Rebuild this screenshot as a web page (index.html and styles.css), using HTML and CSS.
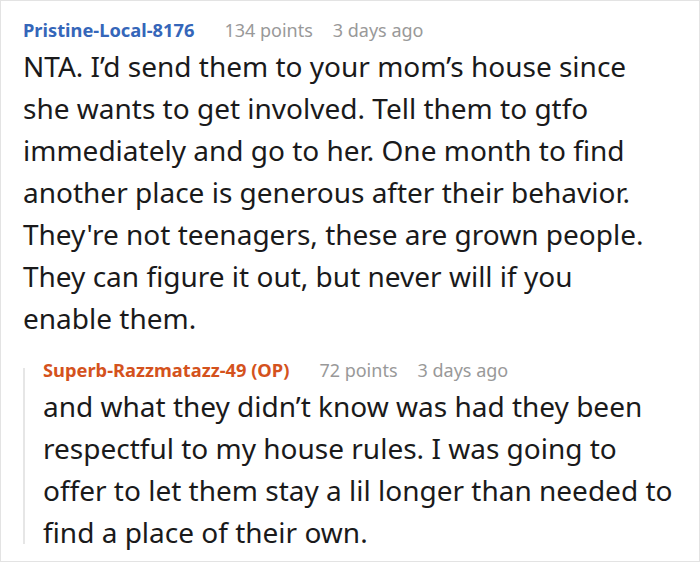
FILE: index.html
```html
<!DOCTYPE html>
<html>
<head>
<meta charset="utf-8">
<link rel="stylesheet" href="styles.css">
</head>
<body>
<div class="frame">
  <div class="comment">
    <div class="meta">
      <span class="author">Pristine-Local-8176</span>
      <span class="info">134 points</span>
      <span class="info">3 days ago</span>
    </div>
    <p class="text">NTA. I’d send them to your mom’s house since<br>she wants to get involved. Tell them to gtfo<br>immediately and go to her. One month to find<br>another place is generous after their behavior.<br>They're not teenagers, these are grown people.<br>They can figure it out, but never will if you<br>enable them.</p>
    <div class="reply">
      <div class="meta">
        <span class="author op">Superb-Razzmatazz-49 (OP)</span>
        <span class="info">72 points</span>
        <span class="info">3 days ago</span>
      </div>
      <p class="text">and what they didn’t know was had they been<br>respectful to my house rules. I was going to<br>offer to let them stay a lil longer than needed to<br>find a place of their own.</p>
    </div>
  </div>
</div>
</body>
</html>
```
FILE: styles.css
```css
html, body {
  margin: 0;
  padding: 0;
  background: #fff;
}
.frame {
  box-sizing: border-box;
  width: 700px;
  height: 562px;
  border: 1px solid #e3e3e3;
  overflow: hidden;
  font-family: "Noto Sans", "Open Sans", sans-serif;
}
.comment {
  padding: 14px 4px 0 22px;
}
.meta {
  display: flex;
  gap: 20px;
  font-size: 18px;
  line-height: 30px;
}
.author {
  color: #3566b9;
  font-weight: 700;
  font-size: 18.3px;
  margin-right: 10px;
}
.author.op {
  color: #d4521d;
}
.info {
  color: #999;
}
.text {
  margin: 0;
  font-size: 28px;
  line-height: 42px;
  color: #1a1a1b;
  white-space: nowrap;
}
.reply {
  position: relative;
  margin-top: 16px;
  padding-left: 20px;
}
.reply::before {
  content: "";
  position: absolute;
  left: 0;
  top: 13px;
  bottom: 9px;
  width: 2px;
  background: #e6e6e6;
}
```
